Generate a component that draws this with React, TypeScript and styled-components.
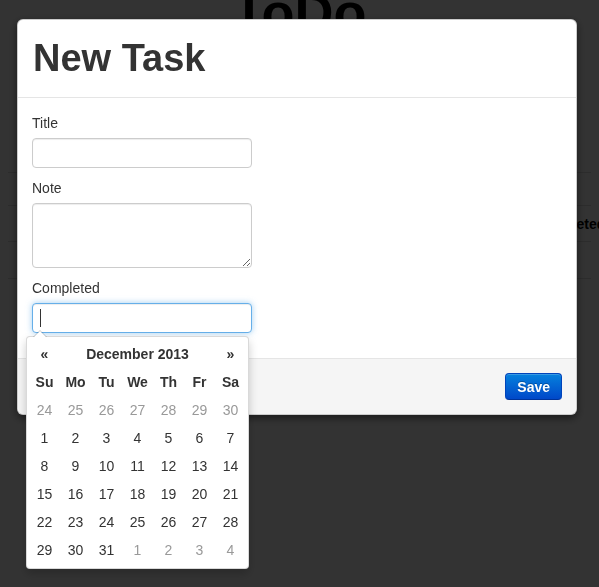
import styled, { createGlobalStyle } from "styled-components";

const GlobalStyle = createGlobalStyle`
  html, body {
    margin: 0;
    padding: 0;
    background: #fff;
    overflow: hidden;
  }
  body {
    width: 599px;
    height: 587px;
    font-family: "Liberation Sans", Arial, Helvetica, sans-serif;
    font-size: 14px;
    color: #333;
  }
  * { box-sizing: border-box; }
`;

// page that sits behind the modal backdrop
const Page = styled.div`
  padding: 0 8px;
`;

const Brand = styled.h1`
  margin: -16px 0 0;
  text-align: center;
  font-size: 54px;
  line-height: 57px;
  font-weight: bold;
  color: #000;
`;

const Table = styled.div`
  margin-top: 131px;
  border-bottom: 1px solid #ddd;
`;

const Row = styled.div<{ $h: number }>`
  height: ${(p) => p.$h}px;
  border-top: 1px solid #ddd;
  display: grid;
  grid-template-columns: 525px auto;
  align-items: center;
  font-weight: bold;
  color: #000;
  white-space: nowrap;
`;

const Backdrop = styled.div`
  position: fixed;
  inset: 0;
  background: rgba(0, 0, 0, 0.8);
`;

const Modal = styled.div`
  position: fixed;
  top: 19px;
  left: 17px;
  width: 560px;
  background: #fff;
  border: 1px solid rgba(0, 0, 0, 0.2);
  border-radius: 6px;
  box-shadow: 0 3px 9px rgba(0, 0, 0, 0.5);
`;

const Header = styled.div`
  padding: 17px 15px 18px 15px;
  border-bottom: 1px solid #e5e5e5;
`;

const Heading = styled.h1`
  margin: 0;
  font-size: 38px;
  line-height: 42px;
  font-weight: bold;
  color: #333;
`;

const Body = styled.div`
  padding: 15px 14px 25px;
`;

const Group = styled.div`
  position: relative;
  margin-bottom: 10px;
  &:last-child { margin-bottom: 0; }
`;

const Label = styled.label`
  display: block;
  line-height: 20px;
  margin-bottom: 5px;
  color: #333;
`;

const Input = styled.input<{ $focused?: boolean }>`
  display: block;
  width: 220px;
  height: 30px;
  padding: 4px 8px;
  font: 14px "Liberation Sans", Arial, sans-serif;
  color: #555;
  background: #fff;
  border: 1px solid ${(p) => (p.$focused ? "#66afe9" : "#ccc")};
  border-radius: 4px;
  outline: none;
  box-shadow: inset 0 1px 1px rgba(0, 0, 0, 0.075)
    ${(p) => (p.$focused ? ", 0 0 6px rgba(102, 175, 233, 0.6)" : "")};
`;

const TextArea = styled.textarea`
  display: block;
  width: 220px;
  height: 65px;
  padding: 4px 8px;
  font: 14px "Liberation Sans", Arial, sans-serif;
  border: 1px solid #ccc;
  border-radius: 4px;
  resize: vertical;
  outline: none;
  box-shadow: inset 0 1px 1px rgba(0, 0, 0, 0.075);
`;

const Caret = styled.span`
  position: absolute;
  left: 8px;
  top: 31px;
  width: 1px;
  height: 18px;
  background: #333;
`;

const Footer = styled.div`
  padding: 14px 14px 14px;
  border-top: 1px solid #e5e5e5;
  background: #f5f5f5;
  border-radius: 0 0 6px 6px;
  display: flex;
  justify-content: flex-end;
`;

const SaveButton = styled.button`
  height: 27px;
  padding: 0 11px;
  font: bold 14px "Liberation Sans", Arial, sans-serif;
  color: #fff;
  text-shadow: 0 -1px 0 rgba(0, 0, 0, 0.25);
  background: linear-gradient(to bottom, #0581dd, #0048c9);
  border: 1px solid #0044bb;
  border-bottom-color: #003399;
  border-radius: 4px;
  box-shadow: inset 0 1px 0 rgba(255, 255, 255, 0.2);
`;

// date picker dropdown
const Picker = styled.div`
  position: absolute;
  top: calc(100% + 3px);
  left: -6px;
  z-index: 10;
  width: 223px;
  padding: 3px 2px 4px;
  background: #fff;
  border: 1px solid rgba(0, 0, 0, 0.15);
  border-radius: 4px;
  box-shadow: 0 5px 10px rgba(0, 0, 0, 0.2);

  &::before {
    content: "";
    position: absolute;
    top: -7px;
    left: 6px;
    border-left: 7px solid transparent;
    border-right: 7px solid transparent;
    border-bottom: 7px solid rgba(0, 0, 0, 0.2);
  }
  &::after {
    content: "";
    position: absolute;
    top: -6px;
    left: 7px;
    border-left: 6px solid transparent;
    border-right: 6px solid transparent;
    border-bottom: 6px solid #fff;
  }
`;

const Grid = styled.div`
  display: grid;
  grid-template-columns: repeat(7, 31px);
  grid-auto-rows: 28px;
  align-items: center;
  text-align: center;
`;

const Cell = styled.div<{ $muted?: boolean; $bold?: boolean; $span?: number }>`
  grid-column: span ${(p) => p.$span ?? 1};
  color: ${(p) => (p.$muted ? "#999" : "#333")};
  font-weight: ${(p) => (p.$bold ? "bold" : "normal")};
`;

const weekDays = ["Su", "Mo", "Tu", "We", "Th", "Fr", "Sa"];

const days = [
  ...[24, 25, 26, 27, 28, 29, 30].map((d) => ({ d, muted: true })),
  ...Array.from({ length: 31 }, (_, i) => ({ d: i + 1, muted: false })),
  ...[1, 2, 3, 4].map((d) => ({ d, muted: true })),
];

const DatePicker = () => (
  <Picker>
    <Grid>
      <Cell $bold>«</Cell>
      <Cell $bold $span={5}>
        December 2013
      </Cell>
      <Cell $bold>»</Cell>
      {weekDays.map((w) => (
        <Cell key={w} $bold>
          {w}
        </Cell>
      ))}
      {days.map((x, i) => (
        <Cell key={i} $muted={x.muted}>
          {x.d}
        </Cell>
      ))}
    </Grid>
  </Picker>
);

export default function App() {
  return (
    <>
      <GlobalStyle />
      <Page>
        <Brand>ToDo</Brand>
        <Table>
          <Row $h={33} />
          <Row $h={36}>
            <span />
            <span>Completed</span>
          </Row>
          <Row $h={37} />
        </Table>
      </Page>
      <Backdrop />
      <Modal>
        <Header>
          <Heading>New Task</Heading>
        </Header>
        <Body>
          <Group>
            <Label>Title</Label>
            <Input type="text" />
          </Group>
          <Group>
            <Label>Note</Label>
            <TextArea />
          </Group>
          <Group>
            <Label>Completed</Label>
            <Input type="text" $focused />
            <Caret />
            <DatePicker />
          </Group>
        </Body>
        <Footer>
          <SaveButton>Save</SaveButton>
        </Footer>
      </Modal>
    </>
  );
}
